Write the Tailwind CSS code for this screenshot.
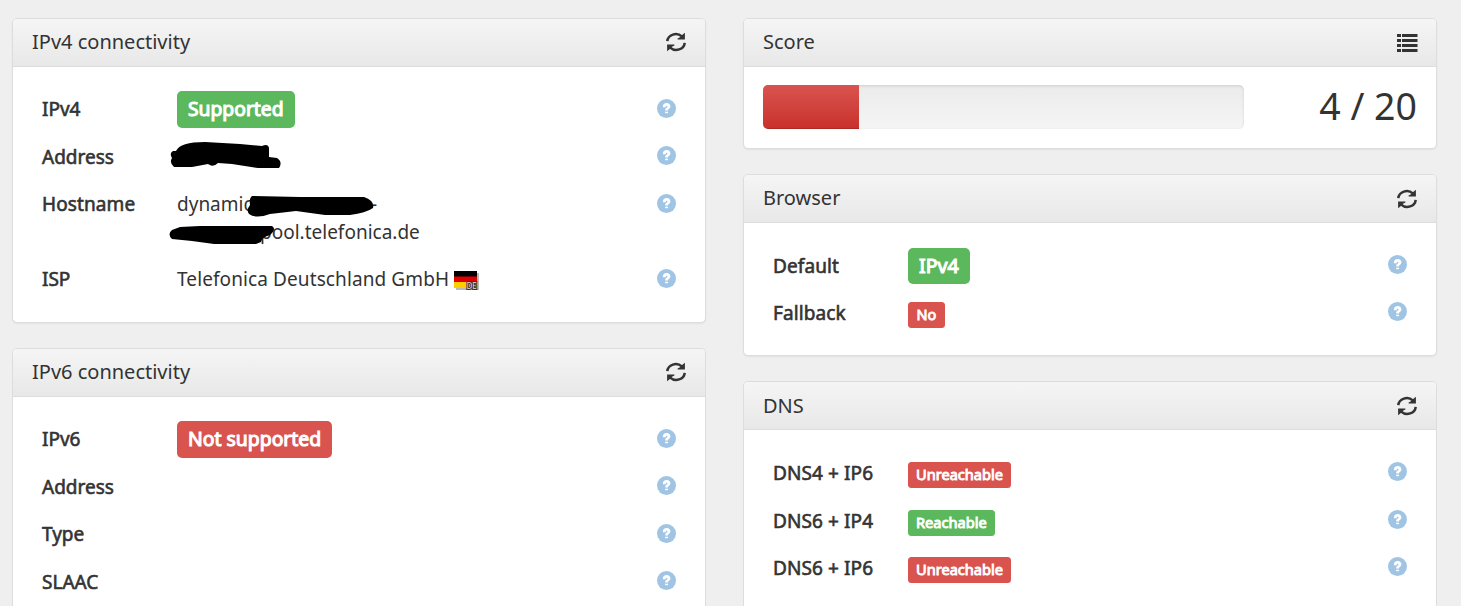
<!DOCTYPE html>
<html lang="en">
<head>
  <meta charset="UTF-8" />
  <meta name="viewport" content="width=device-width, initial-scale=1.0" />
  <script src="https://cdn.jsdelivr.net/npm/@tailwindcss/browser@4"></script>
  <title>IPv6 test</title>
</head>
<body class="bg-[#efefef] font-['Noto_Sans',sans-serif] text-[19px] leading-[28px] text-[#333] h-[606px] overflow-hidden">

  <!-- Icons -->
  <svg class="hidden">
    <symbol id="refresh" viewBox="0 0 20 20">
      <path d="M1.3 9.2A8.5 7.7 0 0 1 15.8 4.4" fill="none" stroke="currentColor" stroke-width="2.5" />
      <path d="M18.9 .8V7.4H11.6V6.5L14 5.3L16.4 2.8Z" fill="currentColor" />
      <path d="M18.7 10.8A8.5 7.7 0 0 1 4.2 15.6" fill="none" stroke="currentColor" stroke-width="2.5" />
      <path d="M1.1 19.2V12.6H8.4V13.5L6 14.7L3.6 17.2Z" fill="currentColor" />
    </symbol>
    <symbol id="list" viewBox="0 0 21 18">
      <path d="M0 0H4V3H0ZM5 0H20.5V3H5ZM0 5H4V8H0ZM5 5H20.5V8H5ZM0 10H4V13H0ZM5 10H20.5V13H5ZM0 15H4V18H0ZM5 15H20.5V18H5Z" fill="currentColor" />
    </symbol>
    <symbol id="help" viewBox="0 0 19 19">
      <circle cx="9.5" cy="9.5" r="9.5" fill="#a0c4e4" />
      <path d="M5.8 8.2C5.8 5.4 7.3 4 9.7 4C12 4 13.4 5.3 13.4 7.2C13.4 9.8 11 9.6 11 11.4H8.2C8.2 8.700 10.500 8.900 10.500 7.300C10.500 6.300 8.700 6.300 8.700 8.200Z" fill="#fff" />
      <path d="M8.1 12.7H11.1V14.2H8.1Z" fill="#fff" />
    </symbol>
  </svg>

  <div class="grid grid-cols-[694px_694px] gap-x-[37px] pl-[12px] pt-[18px] items-start">

    <div class="space-y-[25px]">
      <!-- IPv4 -->
      <div class="h-[305px] bg-white border border-[#ddd] rounded-[5px] shadow-[0_1px_2px_rgba(0,0,0,0.06)]">
        <div class="h-[48px] px-[19px] pb-[2px] flex items-center justify-between rounded-t-[4px] border-b border-[#ddd] bg-linear-to-b from-[#f5f5f5] to-[#e8e8e8]">
          <h3 class="text-[20px]">IPv4 connectivity</h3>
          <svg class="w-[20px] h-[20px]"><use href="#refresh" /></svg>
        </div>
        <div class="px-[29px] pt-[18.5px]">
          <div class="h-[47.5px] pt-[9.5px] flex">
            <div class="w-[135px] [-webkit-text-stroke:0.6px]">IPv4</div>
            <div class="flex-1"><span class="block w-fit h-[37px] -mt-[4px] px-[11px] text-[19.3px] leading-[35px] rounded-[5px] bg-[#5cb85c] text-white [-webkit-text-stroke:1.1px]">Supported</span></div>
            <svg class="w-[19px] h-[19px] mt-[4px]"><use href="#help" /></svg>
          </div>
          <div class="h-[47.5px] pt-[9.5px] flex">
            <div class="w-[135px] [-webkit-text-stroke:0.6px]">Address</div>
            <div class="flex-1 relative">
              <svg class="absolute -left-[7px] -top-[4px]" width="114" height="30" viewBox="170 139 114 30">
                <path d="M176 151Q180 142 205 142L240 144L262 146Q268 143 269 148L269 157L277 158Q283 162 279 168L258 168L232 164L218 163Q213 168 208 164L192 167L174 167Q169 163 172 158Q169 153 173 151Z" />
              </svg>
            </div>
            <svg class="w-[19px] h-[19px] mt-[3px]"><use href="#help" /></svg>
          </div>
          <div class="h-[75.5px] pt-[9.5px] flex">
            <div class="w-[135px] tracking-[0.1px] [-webkit-text-stroke:0.6px]">Hostname</div>
            <div class="flex-1 relative">
              <div class="flex"><span class="w-[194px]">dynamic</span><span>-</span></div>
              <div class="pl-[83px]">pool.telefonica.de</div>
              <svg class="absolute -left-[10px] top-0" width="214" height="56" viewBox="167 190 214 56">
                <path d="M252 196L300 197L364 197Q375 201 373 208Q366 213 350 215L325 215L296 211L270 214Q256 219 249 214Q246 210 250 205Q249 198 252 196Z" />
                <path d="M180 227L200 226L272 226Q277 229 270 235Q262 237 261 242L256 244L214 244L192 241L172 239Q167 234 172 230Z" />
              </svg>
            </div>
            <svg class="w-[19px] h-[19px] mt-[4px]"><use href="#help" /></svg>
          </div>
          <div class="h-[47.5px] pt-[8.5px] flex">
            <div class="w-[135px] [-webkit-text-stroke:0.6px]">ISP</div>
            <div class="flex-1 flex gap-[5px]">
              <span class="w-[272px] whitespace-nowrap tracking-[0.1px]">Telefonica Deutschland GmbH</span>
              <svg class="mt-[6px]" width="26" height="20" viewBox="0 0 26 20">
                <path d="M2 2H25V19H2Z" fill="#bbb" />
                <path d="M0 0H23V6H0Z" />
                <path d="M0 5.5H23V11H0Z" fill="#d00" />
                <path d="M0 11H23V17H0Z" fill="#ffce00" />
                <text x="12.5" y="18" font-size="8" fill="#ddd" stroke="#333" stroke-width="2" paint-order="stroke">DE</text>
              </svg>
            </div>
            <svg class="w-[19px] h-[19px] mt-[4px]"><use href="#help" /></svg>
          </div>
        </div>
      </div>

      <!-- IPv6 -->
      <div class="h-[258px] bg-white border border-b-0 border-[#ddd] rounded-t-[5px]">
        <div class="h-[48px] px-[19px] pb-[2px] flex items-center justify-between rounded-t-[4px] border-b border-[#ddd] bg-linear-to-b from-[#f5f5f5] to-[#e8e8e8]">
          <h3 class="text-[20px]">IPv6 connectivity</h3>
          <svg class="w-[20px] h-[20px]"><use href="#refresh" /></svg>
        </div>
        <div class="px-[29px] pt-[18.5px]">
          <div class="h-[47.5px] pt-[9.5px] flex">
            <div class="w-[135px] [-webkit-text-stroke:0.6px]">IPv6</div>
            <div class="flex-1"><span class="block w-fit h-[37px] -mt-[4px] px-[11px] text-[19.4px] leading-[35px] rounded-[5px] bg-[#d9534f] text-white [-webkit-text-stroke:1.1px]">Not supported</span></div>
            <svg class="w-[19px] h-[19px] mt-[4px]"><use href="#help" /></svg>
          </div>
          <div class="h-[47.5px] pt-[9.5px] flex justify-between">
            <div class="[-webkit-text-stroke:0.6px]">Address</div>
            <svg class="w-[19px] h-[19px] mt-[3px]"><use href="#help" /></svg>
          </div>
          <div class="h-[47.5px] pt-[9.5px] flex justify-between">
            <div class="[-webkit-text-stroke:0.6px]">Type</div>
            <svg class="w-[19px] h-[19px] mt-[4px]"><use href="#help" /></svg>
          </div>
          <div class="h-[47.5px] pt-[9.5px] flex justify-between">
            <div class="[-webkit-text-stroke:0.6px]">SLAAC</div>
            <svg class="w-[19px] h-[19px] mt-[3px]"><use href="#help" /></svg>
          </div>
        </div>
      </div>
    </div>

    <div class="space-y-[25px]">
      <!-- Score -->
      <div class="h-[131px] bg-white border border-[#ddd] rounded-[5px] shadow-[0_1px_2px_rgba(0,0,0,0.06)]">
        <div class="h-[48px] pl-[19px] pr-[18px] pb-[2px] flex items-center justify-between rounded-t-[4px] border-b border-[#ddd] bg-linear-to-b from-[#f5f5f5] to-[#e8e8e8]">
          <h3 class="text-[20px]">Score</h3>
          <svg class="w-[21px] h-[18px] mt-[2px]"><use href="#list" /></svg>
        </div>
        <div class="px-[19px] pt-[18px] flex justify-between">
          <div class="w-[481px] h-[44px] rounded-[5px] overflow-hidden bg-linear-to-b from-[#ebebeb] to-[#f5f5f5] shadow-[inset_0_1px_3px_rgba(0,0,0,0.12)]">
            <div class="w-1/5 h-full bg-linear-to-b from-[#d9534f] to-[#c9302c] shadow-[inset_0_-1px_0_rgba(0,0,0,0.15)]"></div>
          </div>
          <div class="text-[37.5px] leading-[42px]">4 / 20</div>
        </div>
      </div>

      <!-- Browser -->
      <div class="h-[182px] bg-white border border-[#ddd] rounded-[5px] shadow-[0_1px_2px_rgba(0,0,0,0.06)]">
        <div class="h-[48px] px-[19px] flex items-center justify-between rounded-t-[4px] border-b border-[#ddd] bg-linear-to-b from-[#f5f5f5] to-[#e8e8e8]">
          <h3 class="text-[20px] -mt-[2px]">Browser</h3>
          <svg class="w-[20px] h-[20px]"><use href="#refresh" /></svg>
        </div>
        <div class="px-[29px] pt-[18.5px]">
          <div class="h-[47.5px] pt-[9.5px] flex">
            <div class="w-[135px] pt-[1px] tracking-[0.1px] [-webkit-text-stroke:0.6px]">Default</div>
            <div class="flex-1"><span class="block w-fit h-[36px] -mt-[3px] px-[11px] text-[19.6px] leading-[36px] rounded-[5px] bg-[#5cb85c] text-white [-webkit-text-stroke:1.1px]">IPv4</span></div>
            <svg class="w-[19px] h-[19px] mt-[4px]"><use href="#help" /></svg>
          </div>
          <div class="h-[47.5px] pt-[9.5px] flex">
            <div class="w-[135px] tracking-[0.1px] [-webkit-text-stroke:0.6px]">Fallback</div>
            <div class="flex-1"><span class="block w-fit h-[26px] mt-[3px] px-[8.5px] text-[14.5px] leading-[24px] rounded-[3.5px] bg-[#d9534f] text-white [-webkit-text-stroke:0.9px]">No</span></div>
            <svg class="w-[19px] h-[19px] mt-[3px]"><use href="#help" /></svg>
          </div>
        </div>
      </div>

      <!-- DNS -->
      <div class="h-[225px] bg-white border border-b-0 border-[#ddd] rounded-t-[5px]">
        <div class="h-[48px] px-[19px] flex items-center justify-between rounded-t-[4px] border-b border-[#ddd] bg-linear-to-b from-[#f5f5f5] to-[#e8e8e8]">
          <h3 class="text-[20px]">DNS</h3>
          <svg class="w-[20px] h-[20px]"><use href="#refresh" /></svg>
        </div>
        <div class="px-[29px] pt-[18.5px]">
          <div class="h-[47.5px] pt-[10.5px] flex">
            <div class="w-[135px] tracking-[0.1px] [-webkit-text-stroke:0.6px]">DNS4 + IP6</div>
            <div class="flex-1"><span class="block w-fit h-[26px] mt-[3px] px-[8px] text-[14.6px] leading-[24px] rounded-[3.5px] bg-[#d9534f] text-white [-webkit-text-stroke:0.9px]">Unreachable</span></div>
            <svg class="w-[19px] h-[19px] mt-[3px]"><use href="#help" /></svg>
          </div>
          <div class="h-[47.5px] pt-[10.5px] flex">
            <div class="w-[135px] tracking-[0.1px] [-webkit-text-stroke:0.6px]">DNS6 + IP4</div>
            <div class="flex-1"><span class="block w-fit h-[26px] mt-[3px] px-[8px] text-[14.6px] leading-[24px] rounded-[3.5px] bg-[#5cb85c] text-white [-webkit-text-stroke:0.9px]">Reachable</span></div>
            <svg class="w-[19px] h-[19px] mt-[3px]"><use href="#help" /></svg>
          </div>
          <div class="h-[47.5px] pt-[10.5px] flex">
            <div class="w-[135px] tracking-[0.1px] [-webkit-text-stroke:0.6px]">DNS6 + IP6</div>
            <div class="flex-1"><span class="block w-fit h-[26px] mt-[3px] px-[8px] text-[14.6px] leading-[24px] rounded-[3.5px] bg-[#d9534f] text-white [-webkit-text-stroke:0.9px]">Unreachable</span></div>
            <svg class="w-[19px] h-[19px] mt-[3px]"><use href="#help" /></svg>
          </div>
        </div>
      </div>
    </div>

  </div>
</body>
</html>
